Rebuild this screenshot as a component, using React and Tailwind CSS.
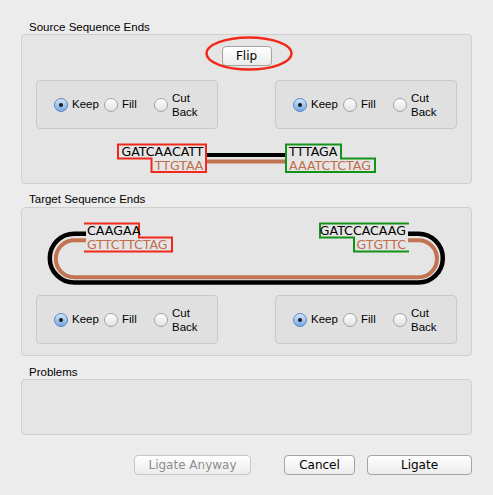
import React from 'react';

const RED = '#f0291a';
const GREEN = '#14931a';
const BROWN = '#c27452';
const BROWN_TEXT = '#bf6e4c';

const Radio = ({ checked }) => (
  <span
    className={`w-[14px] h-[14px] rounded-full border flex items-center justify-center shrink-0 ${
      checked
        ? 'border-[#5b86bd] bg-linear-to-b from-[#d3e5f9] to-[#74a8e4]'
        : 'border-[#a3a3a3] bg-linear-to-b from-white to-[#e2e2e2]'
    }`}
  >
    {checked && <span className="w-[4px] h-[4px] rounded-full bg-[#1b1b1b]" />}
  </span>
);

// Keep / Fill / Cut Back choice for one end
const EndOptions = () => (
  <div className="w-[182px] h-[49px] rounded-[4px] border border-[#c9c9c9] bg-[#e0e0e0] flex items-center pl-[17px] text-[11.5px] text-black">
    <label className="w-[50px] flex items-center gap-[4px]">
      <Radio checked />
      <span>Keep</span>
    </label>
    <label className="w-[50px] flex items-center gap-[4px]">
      <Radio />
      <span>Fill</span>
    </label>
    <label className="flex items-center gap-[4px]">
      <Radio />
      <span className="leading-[14px]">
        Cut
        <br />
        Back
      </span>
    </label>
  </div>
);

const Button = ({ children, className = '', disabled }) => (
  <button
    className={`block h-[20px] rounded-[4px] border bg-linear-to-b from-white to-[#ececec] text-[12px] leading-none font-['DejaVu_Sans',sans-serif] ${
      disabled ? 'border-[#c6c6c6] text-[#8c8c8c]' : 'border-[#a3a3a3] text-black'
    } ${className}`}
  >
    {children}
  </button>
);

const seqFont = { fontFamily: '"DejaVu Sans", sans-serif', fontSize: '12.6px' };

const SourceDiagram = () => (
  <svg width="449" height="42" viewBox="22 138 449 42" className="block">
    <path d="M206,154 H286" stroke="#000" strokeWidth="4" />
    <path d="M206,160.5 H286" stroke={BROWN} strokeWidth="4" />
    <path d="M118,143.5 H206 V171 H151.5 V157.5 H118 Z" fill="none" stroke={RED} strokeWidth="2" />
    <path d="M286,143.5 H341 V157.5 H375 V171 H286 Z" fill="none" stroke={GREEN} strokeWidth="2" />
    <text x="203.5" y="155" textAnchor="end" fill="#000" style={seqFont}>GATCAACATT</text>
    <text x="203.5" y="169" textAnchor="end" fill={BROWN_TEXT} style={seqFont}>TTGTAA</text>
    <text x="289" y="155" fill="#000" style={seqFont}>TTTAGA</text>
    <text x="289" y="169" fill={BROWN_TEXT} style={seqFont}>AAATCTCTAG</text>
  </svg>
);

const TargetDiagram = () => (
  <svg width="449" height="72" viewBox="22 218 449 72" className="block">
    <path
      d="M86,233.8 H74.2 A24.4,24.4 0 0 0 74.2,282.6 H418.4 A24.4,24.4 0 0 0 418.4,233.8 H408"
      fill="none"
      stroke="#000"
      strokeWidth="4.5"
    />
    <path
      d="M86,240.3 H74.3 A18.45,18.45 0 0 0 74.3,277.2 H418.5 A18.45,18.45 0 0 0 418.5,240.3 H408"
      fill="none"
      stroke={BROWN}
      strokeWidth="4"
    />
    <path d="M84,223.5 H139 V237.5 H172 V251.5 H84" fill="none" stroke={RED} strokeWidth="2" />
    <path d="M409,223.5 H320 V237.5 H354 V251.5 H409" fill="none" stroke={GREEN} strokeWidth="2" />
    <text x="87" y="235" fill="#000" style={seqFont}>CAAGAA</text>
    <text x="87" y="249" fill={BROWN_TEXT} style={seqFont}>GTTCTTCTAG</text>
    <text x="406" y="235" textAnchor="end" fill="#000" style={seqFont}>GATCCACAAG</text>
    <text x="406" y="249" textAnchor="end" fill={BROWN_TEXT} style={seqFont}>GTGTTC</text>
  </svg>
);

const SectionTitle = ({ children }) => (
  <div className="h-[14px] leading-[14px] pl-[8px] text-[11.5px] text-black">{children}</div>
);

export default function App() {
  return (
    <div className="w-[493px] h-[495px] bg-[#ececec] px-[21px] pt-[20px] font-['Liberation_Sans',Arial,sans-serif] overflow-hidden">
      <SectionTitle>Source Sequence Ends</SectionTitle>
      <div className="w-[451px] h-[150px] rounded-[4px] border border-[#cfcfcf] bg-[#e5e5e5] flex flex-col">
        <div className="flex justify-center mt-[11px]">
          <div className="relative">
            <Button className="w-[50px] h-[19px]">Flip</Button>
            <svg
              className="absolute left-[-17px] top-[-10px] pointer-events-none"
              width="88"
              height="35"
              viewBox="0 0 88 35"
            >
              <ellipse cx="44" cy="17.5" rx="42.5" ry="16" fill="none" stroke={RED} strokeWidth="2.5" />
            </svg>
          </div>
        </div>
        <div className="flex justify-between px-[14px] mt-[14px]">
          <EndOptions />
          <EndOptions />
        </div>
        <div className="mt-[10px]">
          <SourceDiagram />
        </div>
      </div>

      <div className="mt-[8px]">
        <SectionTitle>Target Sequence Ends</SectionTitle>
      </div>
      <div className="mt-[1px] w-[451px] h-[149px] rounded-[4px] border border-[#cfcfcf] bg-[#e5e5e5] flex flex-col">
        <div className="mt-[10px]">
          <TargetDiagram />
        </div>
        <div className="flex justify-between px-[14px] mt-[5px]">
          <EndOptions />
          <EndOptions />
        </div>
      </div>

      <div className="mt-[9px]">
        <SectionTitle>Problems</SectionTitle>
      </div>
      <div className="w-[451px] h-[56px] rounded-[4px] border border-[#cfcfcf] bg-[#e5e5e5]" />

      <div className="mt-[20px] flex justify-end">
        <Button disabled className="w-[117px]">Ligate Anyway</Button>
        <Button className="w-[71px] ml-[33px]">Cancel</Button>
        <Button className="w-[105px] ml-[12px]">Ligate</Button>
      </div>
    </div>
  );
}
